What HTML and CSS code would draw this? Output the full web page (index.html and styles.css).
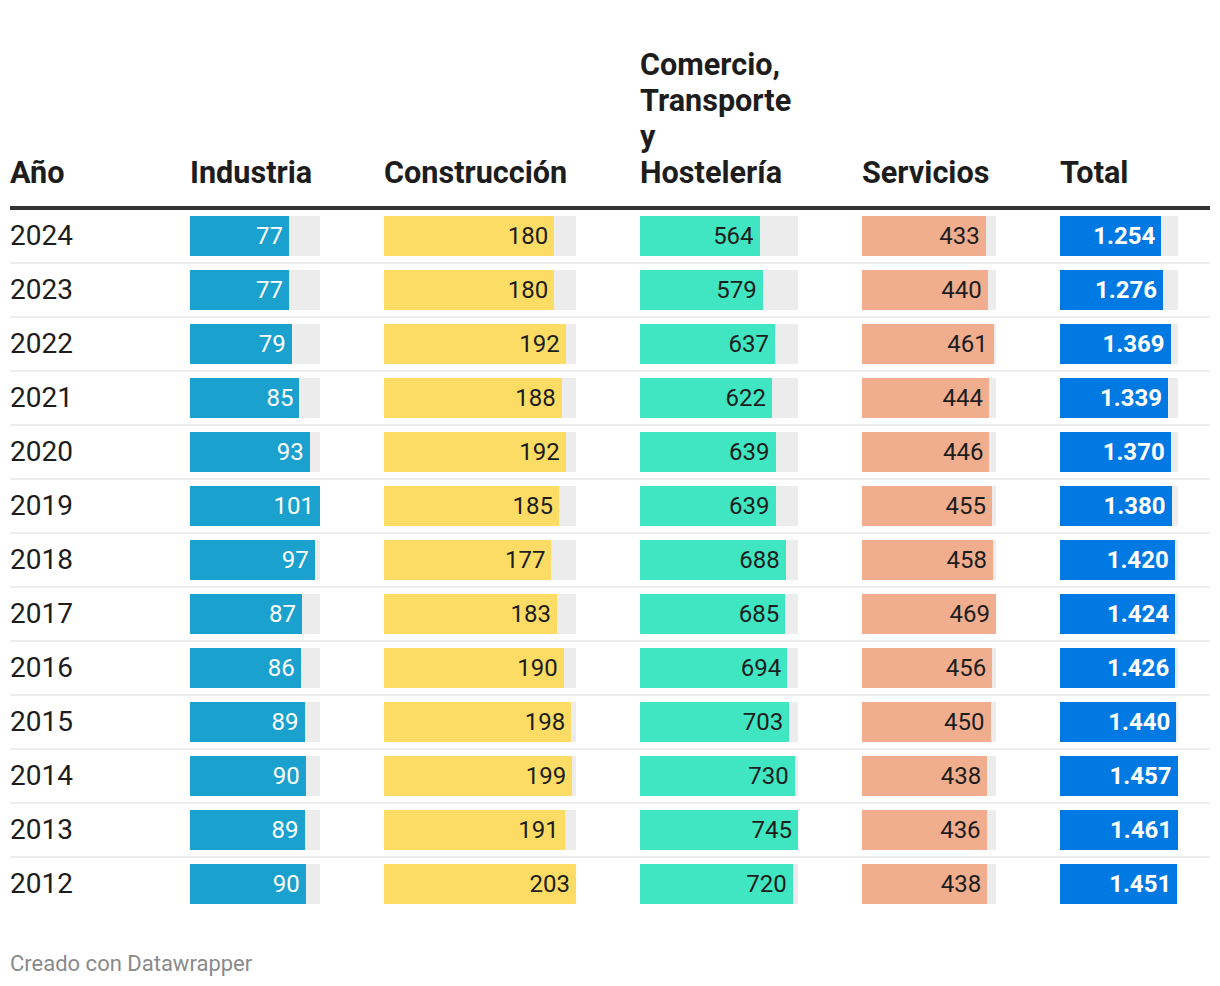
FILE: index.html
```html
<!DOCTYPE html>
<html lang="es">
<head>
<meta charset="utf-8">
<title>Tabla</title>
<link rel="stylesheet" href="styles.css">
</head>
<body>
<div class="wrap">
  <table class="dw">
    <colgroup>
      <col class="c-year"><col class="c-ind"><col class="c-con"><col class="c-com"><col class="c-ser"><col class="c-tot">
    </colgroup>
    <thead>
      <tr>
        <th><div class="h">Año</div></th>
        <th><div class="h h-ind">Industria</div></th>
        <th><div class="h h-con">Construcción</div></th>
        <th><div class="h h-com wrapok">Comercio, Transporte y Hostelería</div></th>
        <th><div class="h h-ser">Servicios</div></th>
        <th><div class="h h-tot">Total</div></th>
      </tr>
    </thead>
    <tbody id="rows">
      <tr><td class="yr">2024</td><td><div class="track t-ind"><div class="bar b-ind" style="width:76.2%">77</div></div></td><td><div class="track t-con"><div class="bar b-con" style="width:88.7%">180</div></div></td><td><div class="track t-com"><div class="bar b-com" style="width:75.7%">564</div></div></td><td><div class="track t-ser"><div class="bar b-ser" style="width:92.3%">433</div></div></td><td><div class="track t-tot"><div class="bar b-tot" style="width:85.8%">1.254</div></div></td></tr>
      <tr><td class="yr">2023</td><td><div class="track t-ind"><div class="bar b-ind" style="width:76.2%">77</div></div></td><td><div class="track t-con"><div class="bar b-con" style="width:88.7%">180</div></div></td><td><div class="track t-com"><div class="bar b-com" style="width:77.7%">579</div></div></td><td><div class="track t-ser"><div class="bar b-ser" style="width:93.8%">440</div></div></td><td><div class="track t-tot"><div class="bar b-tot" style="width:87.3%">1.276</div></div></td></tr>
      <tr><td class="yr">2022</td><td><div class="track t-ind"><div class="bar b-ind" style="width:78.2%">79</div></div></td><td><div class="track t-con"><div class="bar b-con" style="width:94.6%">192</div></div></td><td><div class="track t-com"><div class="bar b-com" style="width:85.5%">637</div></div></td><td><div class="track t-ser"><div class="bar b-ser" style="width:98.3%">461</div></div></td><td><div class="track t-tot"><div class="bar b-tot" style="width:93.7%">1.369</div></div></td></tr>
      <tr><td class="yr">2021</td><td><div class="track t-ind"><div class="bar b-ind" style="width:84.2%">85</div></div></td><td><div class="track t-con"><div class="bar b-con" style="width:92.6%">188</div></div></td><td><div class="track t-com"><div class="bar b-com" style="width:83.5%">622</div></div></td><td><div class="track t-ser"><div class="bar b-ser" style="width:94.7%">444</div></div></td><td><div class="track t-tot"><div class="bar b-tot" style="width:91.6%">1.339</div></div></td></tr>
      <tr><td class="yr">2020</td><td><div class="track t-ind"><div class="bar b-ind" style="width:92.1%">93</div></div></td><td><div class="track t-con"><div class="bar b-con" style="width:94.6%">192</div></div></td><td><div class="track t-com"><div class="bar b-com" style="width:85.8%">639</div></div></td><td><div class="track t-ser"><div class="bar b-ser" style="width:95.1%">446</div></div></td><td><div class="track t-tot"><div class="bar b-tot" style="width:93.8%">1.370</div></div></td></tr>
      <tr><td class="yr">2019</td><td><div class="track t-ind"><div class="bar b-ind" style="width:100%">101</div></div></td><td><div class="track t-con"><div class="bar b-con" style="width:91.1%">185</div></div></td><td><div class="track t-com"><div class="bar b-com" style="width:85.8%">639</div></div></td><td><div class="track t-ser"><div class="bar b-ser" style="width:97.0%">455</div></div></td><td><div class="track t-tot"><div class="bar b-tot" style="width:94.5%">1.380</div></div></td></tr>
      <tr><td class="yr">2018</td><td><div class="track t-ind"><div class="bar b-ind" style="width:96.0%">97</div></div></td><td><div class="track t-con"><div class="bar b-con" style="width:87.2%">177</div></div></td><td><div class="track t-com"><div class="bar b-com" style="width:92.3%">688</div></div></td><td><div class="track t-ser"><div class="bar b-ser" style="width:97.7%">458</div></div></td><td><div class="track t-tot"><div class="bar b-tot" style="width:97.2%">1.420</div></div></td></tr>
      <tr><td class="yr">2017</td><td><div class="track t-ind"><div class="bar b-ind" style="width:86.1%">87</div></div></td><td><div class="track t-con"><div class="bar b-con" style="width:90.1%">183</div></div></td><td><div class="track t-com"><div class="bar b-com" style="width:91.9%">685</div></div></td><td><div class="track t-ser"><div class="bar b-ser" style="width:100%">469</div></div></td><td><div class="track t-tot"><div class="bar b-tot" style="width:97.5%">1.424</div></div></td></tr>
      <tr><td class="yr">2016</td><td><div class="track t-ind"><div class="bar b-ind" style="width:85.1%">86</div></div></td><td><div class="track t-con"><div class="bar b-con" style="width:93.6%">190</div></div></td><td><div class="track t-com"><div class="bar b-com" style="width:93.2%">694</div></div></td><td><div class="track t-ser"><div class="bar b-ser" style="width:97.2%">456</div></div></td><td><div class="track t-tot"><div class="bar b-tot" style="width:97.6%">1.426</div></div></td></tr>
      <tr><td class="yr">2015</td><td><div class="track t-ind"><div class="bar b-ind" style="width:88.1%">89</div></div></td><td><div class="track t-con"><div class="bar b-con" style="width:97.5%">198</div></div></td><td><div class="track t-com"><div class="bar b-com" style="width:94.4%">703</div></div></td><td><div class="track t-ser"><div class="bar b-ser" style="width:95.9%">450</div></div></td><td><div class="track t-tot"><div class="bar b-tot" style="width:98.6%">1.440</div></div></td></tr>
      <tr><td class="yr">2014</td><td><div class="track t-ind"><div class="bar b-ind" style="width:89.1%">90</div></div></td><td><div class="track t-con"><div class="bar b-con" style="width:98.0%">199</div></div></td><td><div class="track t-com"><div class="bar b-com" style="width:98.0%">730</div></div></td><td><div class="track t-ser"><div class="bar b-ser" style="width:93.4%">438</div></div></td><td><div class="track t-tot"><div class="bar b-tot" style="width:99.7%">1.457</div></div></td></tr>
      <tr><td class="yr">2013</td><td><div class="track t-ind"><div class="bar b-ind" style="width:88.1%">89</div></div></td><td><div class="track t-con"><div class="bar b-con" style="width:94.1%">191</div></div></td><td><div class="track t-com"><div class="bar b-com" style="width:100%">745</div></div></td><td><div class="track t-ser"><div class="bar b-ser" style="width:93.0%">436</div></div></td><td><div class="track t-tot"><div class="bar b-tot" style="width:100%">1.461</div></div></td></tr>
      <tr class="last"><td class="yr">2012</td><td><div class="track t-ind"><div class="bar b-ind" style="width:89.1%">90</div></div></td><td><div class="track t-con"><div class="bar b-con" style="width:100%">203</div></div></td><td><div class="track t-com"><div class="bar b-com" style="width:96.6%">720</div></div></td><td><div class="track t-ser"><div class="bar b-ser" style="width:93.4%">438</div></div></td><td><div class="track t-tot"><div class="bar b-tot" style="width:99.3%">1.451</div></div></td></tr>
    </tbody>
  </table>
  <div class="footer">Creado con Datawrapper</div>
</div>
</body>
</html>
```

FILE: styles.css
```css
html, body {
  margin: 0;
  padding: 0;
  background: #ffffff;
}

body {
  font-family: Roboto, "Liberation Sans", sans-serif;
  color: #1d1d1d;
}

.wrap {
  padding: 47px 10px 0 10px;
}

.dw {
  border-collapse: collapse;
  table-layout: fixed;
  width: 1200px;
}

.c-year { width: 180px; }
.c-ind { width: 194px; }
.c-con { width: 256px; }
.c-com { width: 222px; }
.c-ser { width: 198px; }
.c-tot { width: 150px; }

.dw th {
  text-align: left;
  vertical-align: bottom;
  padding: 0 0 15px 0;
  border-bottom: 4px solid #333333;
  font-size: 30.6px;
  line-height: 36px;
  font-weight: 700;
  color: #1d1d1d;
}

.h { white-space: nowrap; }
.h.wrapok { white-space: normal; }
.h-ind { width: 130px; }
.h-con { width: 192px; }
.h-com { width: 158px; }
.h-ser { width: 134px; }
.h-tot { width: 118px; }

.dw td {
  padding: 6px 0;
  border-bottom: 2px solid #eeeeee;
  vertical-align: middle;
}

.dw tr.last td {
  border-bottom: none;
}

.yr {
  font-size: 28px;
  line-height: 40px;
  color: #1d1d1d;
}

.track {
  height: 40px;
  background: #ececec;
}

.t-ind { width: 130px; }
.t-con { width: 192px; }
.t-com { width: 158px; }
.t-ser { width: 134px; }
.t-tot { width: 118px; }

.bar {
  height: 40px;
  box-sizing: border-box;
  display: flex;
  align-items: center;
  justify-content: flex-end;
  padding-right: 6px;
  font-size: 24px;
  line-height: 40px;
  white-space: nowrap;
}

.b-ind { background: #1aa1cd; color: #ffffff; }
.b-con { background: #fcdc64; color: #1d1d1d; }
.b-com { background: #3fe6c1; color: #1d1d1d; }
.b-ser { background: #f0ae8f; color: #1d1d1d; }
.b-tot { background: #0079e2; color: #ffffff; font-weight: 700; }

.footer {
  margin-top: 41px;
  font-size: 22px;
  line-height: 26px;
  color: #8a8a8a;
}
```
